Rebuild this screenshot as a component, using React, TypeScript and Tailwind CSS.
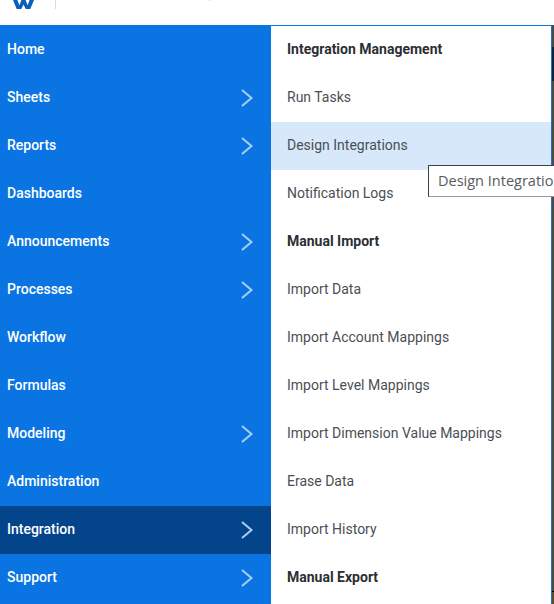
const leftItems = [
  { label: 'Home' },
  { label: 'Sheets', arrow: true },
  { label: 'Reports', arrow: true },
  { label: 'Dashboards' },
  { label: 'Announcements', arrow: true },
  { label: 'Processes', arrow: true },
  { label: 'Workflow' },
  { label: 'Formulas' },
  { label: 'Modeling', arrow: true },
  { label: 'Administration' },
  { label: 'Integration', arrow: true, active: true },
  { label: 'Support', arrow: true },
];

const rightItems = [
  { label: 'Integration Management', heading: true },
  { label: 'Run Tasks' },
  { label: 'Design Integrations', hover: true },
  { label: 'Notification Logs' },
  { label: 'Manual Import', heading: true },
  { label: 'Import Data' },
  { label: 'Import Account Mappings' },
  { label: 'Import Level Mappings' },
  { label: 'Import Dimension Value Mappings' },
  { label: 'Erase Data' },
  { label: 'Import History' },
  { label: 'Manual Export', heading: true },
];

function Chevron() {
  return (
    <svg width="14" height="20" viewBox="0 0 14 20" fill="none" className="text-[#a9cdf5]">
      <path d="M2 2l9.5 8L2 18" stroke="currentColor" strokeWidth="2" />
    </svg>
  );
}

export default function App() {
  return (
    <div className="relative h-[604px] w-[554px] overflow-hidden bg-white font-['Roboto',sans-serif] text-sm">
      {/* top bar, mostly cut off */}
      <div className="flex h-[25px] items-start">
        <div className="h-[9px] w-[56px] border-r border-[#dddddd] pl-[13px]">
          <svg width="21" height="9" viewBox="0 0 21 9" fill="none" className="block">
            <path d="M0 0h4.4l2 5.2L8.4 0h4.2l2 5.2L16.6 0H21l-3.7 9h-4.6l-2.2-4.6L8.3 9H3.7z" fill="#0a5fb8" />
          </svg>
        </div>
        <div className="ml-[153px] h-px w-px bg-[#cccccc]" />
      </div>

      <div className="flex h-[579px]">
        <div className="flex w-[552px] shrink-0 flex-col border-t border-[#0a75e2]">
          <div className="flex flex-1">
            <nav className="w-[271px] shrink-0 bg-[#0a75e2] text-white">
              {leftItems.map(item => (
                <div
                  key={item.label}
                  className={`flex h-12 items-center justify-between pl-[7px] pr-[17px] font-medium ${item.active ? 'bg-[#03448a]' : ''}`}
                >
                  <span className="mb-[2px]">{item.label}</span>
                  {item.arrow && <Chevron />}
                </div>
              ))}
            </nav>

            <div className="w-[281px] shrink-0 border-r border-[#1f6fc4] bg-white">
              {rightItems.map(item => (
                <div
                  key={item.label}
                  className={`flex h-12 items-center pb-[2px] pl-4 ${item.heading ? 'font-bold text-[#2b2f33]' : 'text-[#4a4f55]'} ${item.hover ? 'bg-[#d6e8fa]' : ''}`}
                >
                  {item.label}
                </div>
              ))}
            </div>
          </div>
        </div>

        {/* sliver of the page behind the menu */}
        <div className="flex w-[2px] flex-col">
          <div className="h-[22px] bg-[#4a4a4a]" />
          <div className="h-[34px] bg-[#0d2440]" />
          <div className="h-[510px] bg-[#4a4a4a]" />
          <div className="h-px bg-black" />
          <div className="flex-1 bg-[#5a4a3a]" />
        </div>
      </div>

      {/* tooltip */}
      <div className="absolute left-[428px] top-[165px] h-[32px] w-[140px] overflow-hidden whitespace-nowrap border border-[#3b4148] border-b-[#999999] bg-white pl-[9px] pt-[5px] font-['Open_Sans',sans-serif] text-[14.5px] text-[#555b62]">
        Design Integrations
      </div>
    </div>
  );
}
